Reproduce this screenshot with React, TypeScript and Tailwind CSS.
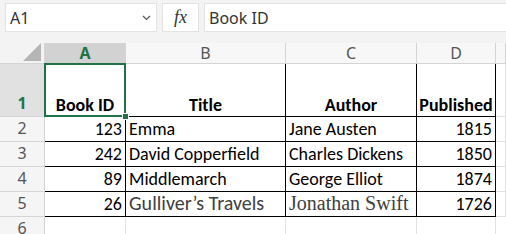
import React from "react";

const FONT = { fontFamily: "Carlito, Calibri, Lato, 'Noto Sans', sans-serif" };
const UI = { fontFamily: "'Segoe UI', 'Noto Sans', 'Open Sans', sans-serif" };

const cols = [81, 160, 131, 79];

function ColHeader({ label, w, sel }: { label: string; w?: number; sel?: boolean }) {
  return (
    <div
      className={`flex items-center justify-center border-r border-b border-[#d4d4d4] text-[16px] ${
        sel ? "bg-[#d2d2d2] text-[#217346] font-bold border-b-[#217346]" : "bg-[#f7f7f7] text-[#555]"
      } ${w ? "" : "flex-1"}`}
      style={w ? { width: w } : undefined}
    >
      {label}
    </div>
  );
}

function RowHeader({ n, h, sel }: { n: number; h: number; sel?: boolean }) {
  return (
    <div
      className={`w-[45px] shrink-0 flex items-end justify-center border-r border-b border-[#d4d4d4] text-[16px] pb-[1px] ${
        sel ? "bg-[#e1e1e1] text-[#217346] font-bold" : "bg-[#f5f5f5] text-[#555]"
      }`}
      style={{ height: h, ...UI }}
    >
      {n}
    </div>
  );
}

type Cell = { t: string; right?: boolean; cls?: string; style?: React.CSSProperties };

function DataRow({ n, cells, h, headerRow }: { n: number; cells: Cell[]; h: number; headerRow?: boolean }) {
  return (
    <div className="flex" style={{ height: h }}>
      <RowHeader n={n} h={h} sel={headerRow} />
      {cells.map((c, i) => (
        <div
          key={i}
          className={`shrink-0 flex items-end border-b border-r border-black px-[3px] pb-[1px] whitespace-nowrap text-black leading-none ${
            c.right ? "justify-end" : headerRow ? "justify-center" : "justify-start"
          } ${c.cls ?? "text-[18px]"}`}
          style={{ width: cols[i], ...FONT, ...c.style }}
        >
          <span className={headerRow ? "pb-[1px]" : "pb-[2px]"}>{c.t}</span>
        </div>
      ))}
      <div className="flex-1 border-b border-r border-[#e1e1e1]" />
    </div>
  );
}

export default function App() {
  return (
    <div className="w-[506px] h-[234px] overflow-hidden bg-white relative select-none">
      {/* formula bar */}
      <div className="h-[43px] bg-[#f3f3f3] flex items-start pt-[3px] gap-[5px] pl-[5px]">
        <div className="w-[152px] h-[29px] bg-white border border-[#e3e3e3] flex items-center justify-between pl-[4px] pr-[5px]">
          <span className="text-[16px] text-[#333]" style={UI}>A1</span>
          <svg width="9" height="6" viewBox="0 0 9 6">
            <path d="M1 1 L4.5 4.5 L8 1" fill="none" stroke="#555" strokeWidth="1.2" />
          </svg>
        </div>
        <div className="w-[37px] h-[29px] bg-white border border-[#e3e3e3] flex items-center justify-center">
          <span className="italic text-[18px] text-[#333]" style={{ fontFamily: "'Liberation Serif', serif" }}>
            fx
          </span>
        </div>
        <div className="flex-1 h-[29px] bg-white border border-[#e3e3e3] border-r-0 flex items-center pl-[4px]">
          <span className="text-[16px] text-[#333]" style={UI}>Book ID</span>
        </div>
      </div>

      {/* column headers */}
      <div className="flex h-[21px]" style={UI}>
        <div className="w-[45px] shrink-0 bg-[#f3f3f3] border-r border-b border-[#d4d4d4] relative">
          <svg className="absolute right-[3px] bottom-[2px]" width="18" height="18" viewBox="0 0 18 18">
            <polygon points="18,0 18,18 0,18" fill="#b5b5b5" />
          </svg>
        </div>
        <ColHeader label="A" w={81} sel />
        <ColHeader label="B" w={160} />
        <ColHeader label="C" w={131} />
        <ColHeader label="D" w={79} />
        <ColHeader label="" />
      </div>

      <DataRow
        n={1}
        h={53}
        headerRow
        cells={[
          { t: "Book ID", cls: "text-[18px] font-bold justify-center" },
          { t: "Title", cls: "text-[18px] font-bold justify-center" },
          { t: "Author", cls: "text-[18px] font-bold justify-center" },
          { t: "Published", cls: "text-[18px] font-bold justify-center" },
        ]}
      />
      <DataRow n={2} h={25} cells={[{ t: "123", right: true }, { t: "Emma" }, { t: "Jane Austen" }, { t: "1815", right: true }]} />
      <DataRow
        n={3}
        h={25}
        cells={[{ t: "242", right: true }, { t: "David Copperfield" }, { t: "Charles Dickens" }, { t: "1850", right: true }]}
      />
      <DataRow n={4} h={25} cells={[{ t: "89", right: true }, { t: "Middlemarch" }, { t: "George Elliot" }, { t: "1874", right: true }]} />
      <DataRow
        n={5}
        h={25}
        cells={[
          { t: "26", right: true },
          { t: "Gulliver’s Travels", cls: "text-[20px]", style: { color: "#404040" } },
          { t: "Jonathan Swift", cls: "text-[20px]", style: { fontFamily: "'Liberation Serif', serif", color: "#404040" } },
          { t: "1726", right: true },
        ]}
      />
      {/* row 6 */}
      <div className="flex h-[25px]">
        <RowHeader n={6} h={25} />
        <div className="w-[81px] border-r border-[#e1e1e1]" />
        <div className="w-[160px] border-r border-[#e1e1e1]" />
        <div className="w-[131px] border-r border-[#e1e1e1]" />
        <div className="w-[79px] border-r border-[#e1e1e1]" />
        <div className="flex-1" />
      </div>

      {/* selection box */}
      <div className="absolute left-[44px] top-[63px] w-[82px] h-[54px] border-2 border-[#217346] pointer-events-none" />
      <div className="absolute left-[122px] top-[113px] w-[7px] h-[7px] bg-[#217346] border border-white" />
    </div>
  );
}
